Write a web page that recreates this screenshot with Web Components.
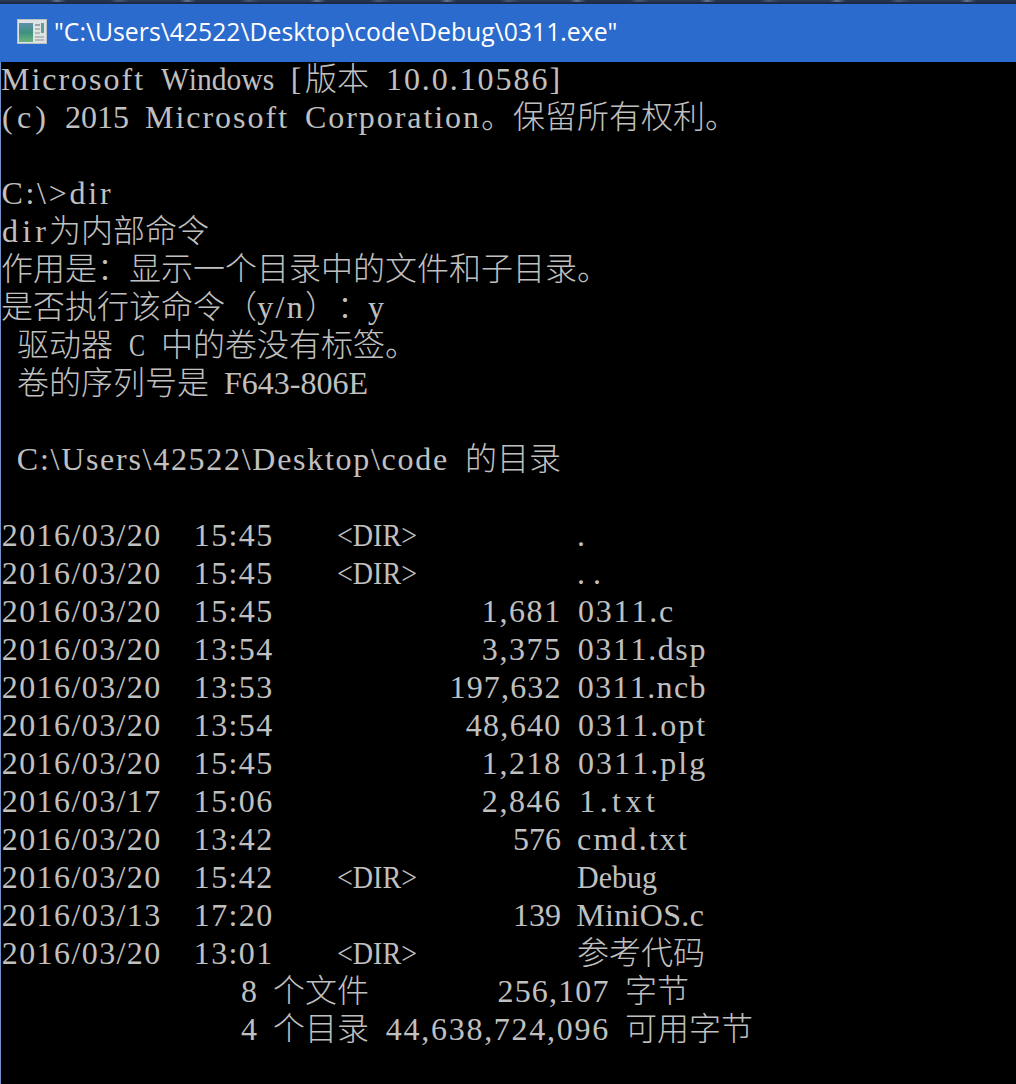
<!DOCTYPE html>
<html lang="zh-CN"><head><meta charset="utf-8"><title>0311.exe</title>
<style>html,body{margin:0;padding:0;background:#000}</style></head>
<body>
<console-window title-text='"C:\Users\42522\Desktop\code\Debug\0311.exe"'>
<console-line>Microsoft Windows [版本 10.0.10586]</console-line>
<console-line>(c) 2015 Microsoft Corporation。保留所有权利。</console-line>
<console-line></console-line>
<console-line>C:\>dir</console-line>
<console-line>dir为内部命令</console-line>
<console-line>作用是：显示一个目录中的文件和子目录。</console-line>
<console-line>是否执行该命令（y/n）：y</console-line>
<console-line> 驱动器 C 中的卷没有标签。</console-line>
<console-line> 卷的序列号是 F643-806E</console-line>
<console-line></console-line>
<console-line> C:\Users\42522\Desktop\code 的目录</console-line>
<console-line></console-line>
<console-line>2016/03/20  15:45    &lt;DIR&gt;          .</console-line>
<console-line>2016/03/20  15:45    &lt;DIR&gt;          ..</console-line>
<console-line>2016/03/20  15:45             1,681 0311.c</console-line>
<console-line>2016/03/20  13:54             3,375 0311.dsp</console-line>
<console-line>2016/03/20  13:53           197,632 0311.ncb</console-line>
<console-line>2016/03/20  13:54            48,640 0311.opt</console-line>
<console-line>2016/03/20  15:45             1,218 0311.plg</console-line>
<console-line>2016/03/17  15:06             2,846 1.txt</console-line>
<console-line>2016/03/20  13:42               576 cmd.txt</console-line>
<console-line>2016/03/20  15:42    &lt;DIR&gt;          Debug</console-line>
<console-line>2016/03/13  17:20               139 MiniOS.c</console-line>
<console-line>2016/03/20  13:01    &lt;DIR&gt;          参考代码</console-line>
<console-line>               8 个文件        256,107 字节</console-line>
<console-line>               4 个目录 44,638,724,096 可用字节</console-line>
</console-window>
<script>
const CELL = 16;
const ctx = document.createElement('canvas').getContext('2d');
ctx.font = '32px "Liberation Serif"';
const isWide = c => c.codePointAt(0) > 0x2E7F;

class ConsoleLine extends HTMLElement {
  connectedCallback() {
    const text = this.textContent;
    const root = this.attachShadow({mode:'open'});
    root.innerHTML = `<style>
      :host{display:block;height:38px;white-space:pre;
        font:32px/34px "Liberation Serif","Noto Sans CJK SC",serif;color:#c0c0c0;word-spacing:8px;font-kerning:none}
      .w{font-family:"Noto Sans CJK SC","Liberation Serif",sans-serif;font-weight:300;word-spacing:0;line-height:1px;text-spacing-trim:space-all}
      .l{display:inline-block;word-spacing:0;transform-origin:0 50%}
    </style>`;
    const runs = text.match(/ +|[^ ]+/g) || [];
    for (const run of runs) {
      if (run[0] === ' ') { root.append(run); continue; }
      for (const tok of run.match(/[\u2E80-\uFFFF]+|[^\u2E80-\uFFFF]+/g)) {
        const s = document.createElement('span');
        s.textContent = tok;
        if (isWide(tok[0])) {
          s.className = 'w';
        } else {
          s.className = 'l';
          const n = tok.length, cell = n * CELL, w = ctx.measureText(tok).width;
          s.style.width = cell + 'px';
          if (w > cell) {
            s.style.transform = `scaleX(${(cell / w).toFixed(4)})`;
          } else {
            const ls = (cell - w) / n;
            s.style.letterSpacing = ls.toFixed(3) + 'px';
            if (!/^\.+$/.test(tok)) {
              const nudge = /^\d/.test(tok) ? 0 : 1;
              s.style.textIndent = (ls / 2 - nudge).toFixed(3) + 'px';
            }
          }
        }
        root.append(s);
      }
    }
  }
}
class ConsoleWindow extends HTMLElement {
  connectedCallback() {
    const root = this.attachShadow({mode:'open'});
    const title = this.getAttribute('title-text');
    root.innerHTML = `<style>
      :host{display:block;width:1016px;height:1084px;overflow:hidden;background:#000}
      .strip{height:4px;background:
        linear-gradient(#0000 0 2px,#1d2a45 2px 4px),
        repeating-linear-gradient(90deg,#2b3854 0 50px,#667289 57px,#26324e 66px 110px,#4b5770 118px,#2b3854 130px)}
      .bar{height:58px;box-sizing:border-box;background:#2b6bcd;display:flex;align-items:center;gap:7px;padding:0 0 3px 17px;
        color:#fff;font:24.75px "Open Sans","Noto Sans",sans-serif;white-space:pre}
      .body{border-left:1px solid #6f93c9;height:1022px;box-sizing:border-box;background:#000}
      svg{flex:none;display:block}
    </style>
    <div class="strip"></div>
    <div class="bar">
      <svg width="30" height="25" viewBox="0 0 30 25">
        <defs><linearGradient id="g" x1="0" y1="0" x2="0" y2="1"><stop offset="0" stop-color="#5f8fa8"/><stop offset=".5" stop-color="#3f917f"/><stop offset="1" stop-color="#6db37f"/></linearGradient></defs>
        <rect width="30" height="25" fill="#dfe3e3"/>
        <rect x=".5" y=".5" width="29" height="24" fill="none" stroke="#b9c0c4"/>
        <rect x="2" y="4" width="14" height="19" fill="url(#g)"/>
        <rect x="24" y="4" width="3" height="10" fill="#5f9f9a"/>
        <rect x="18" y="5" width="5" height="2" fill="#9aa3a8"/>
        <rect x="18" y="9" width="5" height="2" fill="#b4bbbf"/>
        <rect x="18" y="13" width="5" height="2" fill="#b4bbbf"/>
        <rect x="18" y="17" width="9" height="2" fill="#b4bbbf"/>
        <rect x="18" y="20" width="9" height="2" fill="#b4bbbf"/>
      </svg>
      <span></span>
    </div>
    <div class="body"><slot></slot></div>`;
    root.querySelector('span').textContent = title;
  }
}
customElements.define('console-line', ConsoleLine);
customElements.define('console-window', ConsoleWindow);
</script>
</body></html>
